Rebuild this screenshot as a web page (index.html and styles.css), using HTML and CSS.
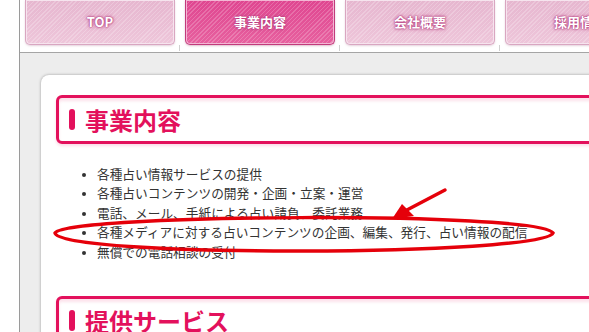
FILE: index.html
```html
<!DOCTYPE html>
<html lang="ja">
<head>
    <meta charset="UTF-8">
    <title>事業内容</title>
    <link rel="stylesheet" href="styles.css">
</head>
<body>

<div class="wrap">
    <ul class="nav">
        <li><a class="tab" href="#">TOP</a></li>
        <li><a class="tab active" href="#">事業内容</a></li>
        <li><a class="tab" href="#">会社概要</a></li>
        <li><a class="tab" href="#">採用情報</a></li>
    </ul>

    <div class="main">
        <div class="card">
            <h2 class="title">事業内容</h2>
            <ul class="list">
                <li>各種占い情報サービスの提供</li>
                <li>各種占いコンテンツの開発・企画・立案・運営</li>
                <li>電話、メール、手紙による占い請負、委託業務</li>
                <li>各種メディアに対する占いコンテンツの企画、編集、発行、占い情報の配信</li>
                <li>無償での電話相談の受付</li>
            </ul>

            <h2 class="title">提供サービス</h2>
        </div>
    </div>
</div>

<!-- annotation: red circle + arrow -->
<svg class="mark" width="589" height="332" viewBox="0 0 589 332">
    <path d="M55,233 C60,214 540,211 553,233 C545,256 60,258 55,233 Z" fill="none" stroke="#e5000a" stroke-width="3.5"/>
    <line x1="445" y1="190" x2="405" y2="211" stroke="#e5000a" stroke-width="3.5" stroke-linecap="round"/>
    <polygon points="392,219 402,204 414,216" fill="#e5000a"/>
</svg>

</body>
</html>
```

FILE: styles.css
```css
html, body {
    margin: 0;
    padding: 0;
    overflow: hidden;
}

body {
    font-family: "Noto Sans CJK JP", "Noto Sans", sans-serif;
    background: #fff;
    position: relative;
    height: 332px;
}

.wrap {
    margin-left: 19px;
    border-left: 1px solid #9a9a9a;
    height: 332px;
    width: 700px;
}

/* nav */
.nav {
    display: flex;
    margin: 0;
    padding: 0;
    list-style: none;
    height: 52px;
    border-bottom: 1px solid #a5a5a5;
    background: #fff;
}

.nav li {
    width: 160px;
    flex: none;
}

.nav li::after {
    content: '';
    display: block;
    height: 6px;
    border-right: 1px solid #d0d0d0;
}

.tab {
    display: flex;
    align-items: center;
    justify-content: center;
    height: 42px;
    margin: 0 5px;
    padding-bottom: 2px;
    border: 1px solid #d9a6c1;
    border-top: none;
    border-radius: 0 0 5px 5px;
    box-shadow: inset 0 0 0 1px #f6e4ee, 0 1px 2px rgba(150, 80, 120, 0.25);
    background:
        repeating-linear-gradient(135deg, rgba(255,255,255,0.22) 0 1px, rgba(255,255,255,0) 1px 3px),
        linear-gradient(#e6b6cf, #eec6da);
    color: #fff;
    font-size: 13px;
    font-weight: bold;
    text-decoration: none;
    text-shadow: 0 0 1px #b0357a, 0 0 2px #b0357a, 0 0 4px #c04a88;
}

.tab.active {
    border-color: #c23a7c;
    box-shadow: inset 0 0 0 1px #f3b7d4, 0 1px 2px rgba(150, 40, 90, 0.3);
    background:
        repeating-linear-gradient(135deg, rgba(255,255,255,0.2) 0 1px, rgba(255,255,255,0) 1px 3px),
        linear-gradient(#df4590, #e7619f);
}

/* content */
.main {
    background: #ededed;
    padding: 22px 0 0 21px;
    height: 300px;
}

.card {
    background: #fff;
    border-radius: 8px 0 0 0;
    box-shadow: 0 0 3px rgba(0, 0, 0, 0.35);
    padding: 20px 0 0 15px;
    height: 400px;
}

.title {
    position: relative;
    margin: 0;
    height: 43px;
    line-height: 43px;
    border: 3px solid #e3115c;
    border-radius: 6px;
    padding-left: 26px;
    color: #e3115c;
    font-size: 24px;
    font-weight: bold;
    box-shadow: inset 0 3px 3px rgba(227, 17, 92, 0.12), 0 2px 3px rgba(227, 17, 92, 0.15);
}

.title::before {
    content: '';
    position: absolute;
    left: 10px;
    top: 11px;
    width: 6px;
    height: 21px;
    border-radius: 3px;
    background: #e3115c;
}

.list {
    margin: 20px 0 35px;
    padding-left: 41px;
    color: #333;
    font-size: 12.7px;
    line-height: 19.4px;
}

.list li::marker {
    font-size: 10px;
}

.mark {
    position: absolute;
    left: 0;
    top: 0;
    pointer-events: none;
}
```
